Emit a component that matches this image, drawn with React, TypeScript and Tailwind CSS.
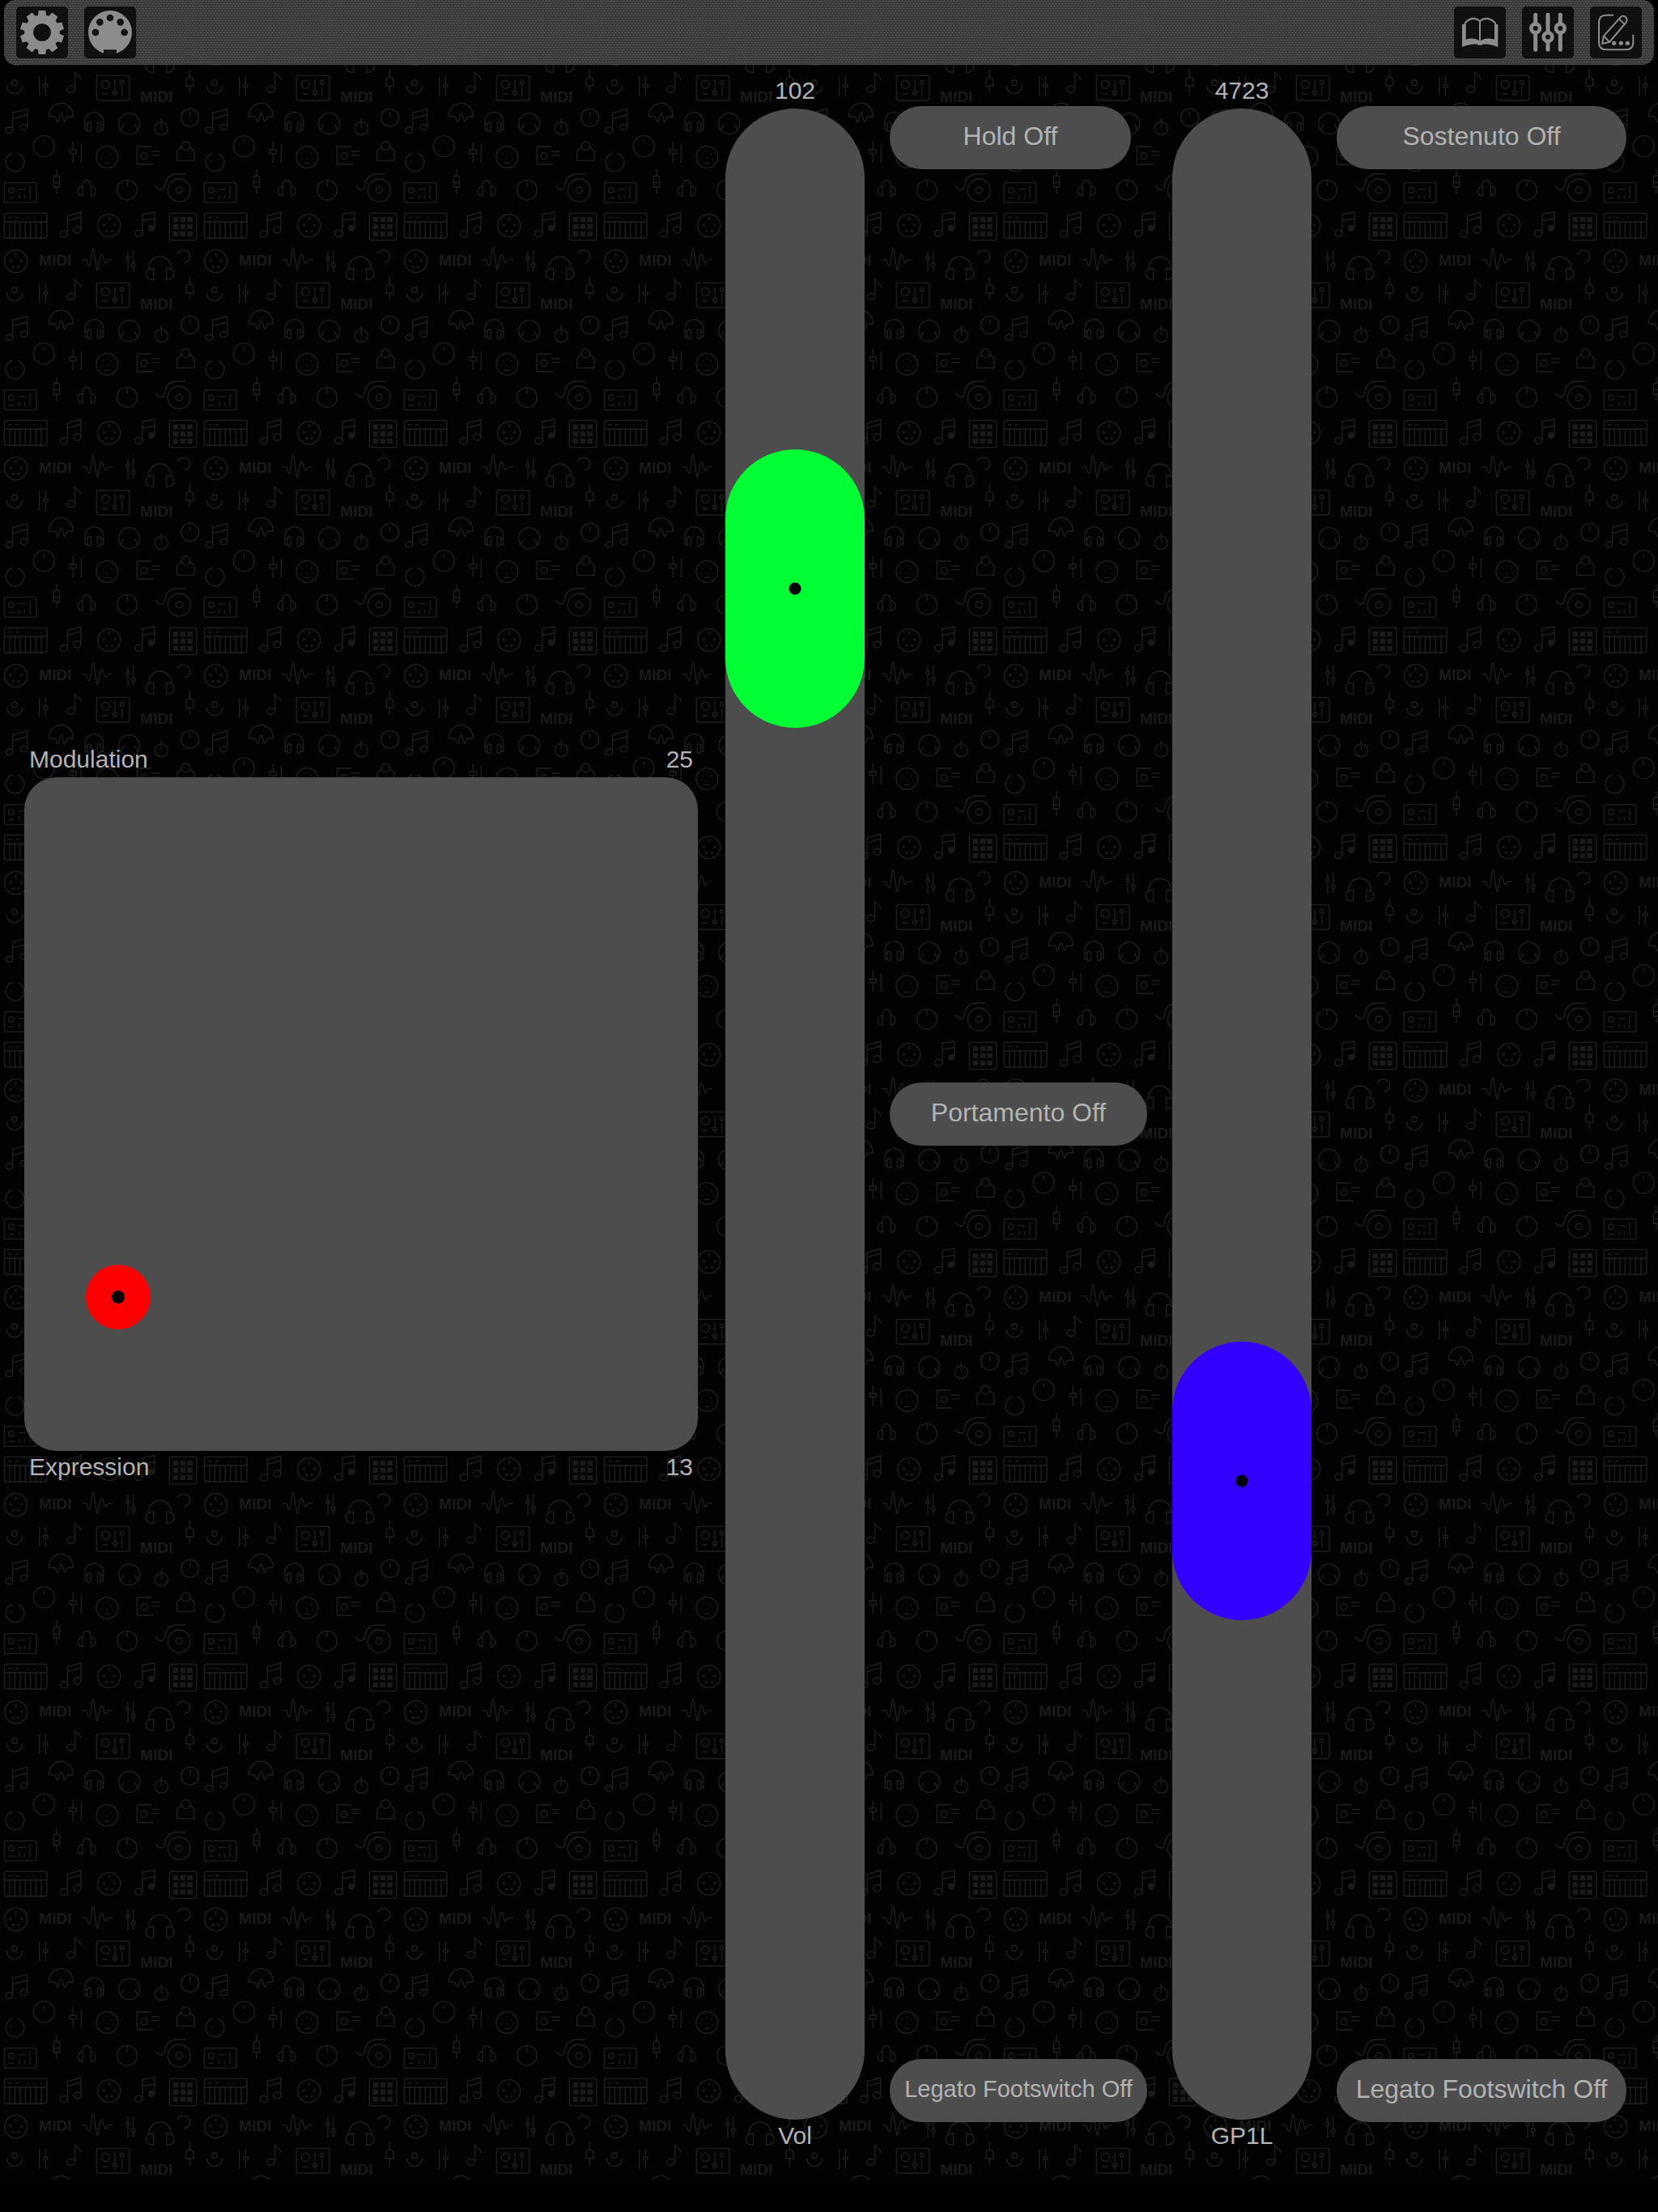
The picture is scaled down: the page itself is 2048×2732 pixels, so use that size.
import { useState } from "react";
import type { ReactNode } from "react";

function PatternIcons() {
  const keys = [36, 55, 75, 94, 113, 133, 153];
  const padX = [641, 668, 694];
  const padY = [594, 620, 647];
  return (
    <g id="midi-icons" fill="none" stroke="#1f1f1f" strokeWidth="4" strokeLinecap="round" strokeLinejoin="round">
      {/* knobs and faders */}
      <circle cx="54" cy="97" r="10" />
      <path d="M25 108A29 29 0 0 0 83 108" />
      <path d="M146 75V143M169 73V103M169 112V143M161 103h16v9h-16z" />
      <ellipse cx="263" cy="121" rx="15" ry="12" />
      <path d="M278 121V57C280 71 300 69 300 85" />
      <rect x="358" y="70" width="122" height="92" rx="8" />
      <circle cx="391" cy="103" r="15" />
      <path d="M381 138h17M426 87V128M419 128h14v10h-14zM426 138v8M452 111V147" />
      <circle cx="452" cy="95" r="7" />
      <path d="M703 48V75M690 108V84L697 76H709L717 84V108ZM703 108V132" />

      {/* notes, headphones */}
      <ellipse cx="34" cy="272" rx="13" ry="11" />
      <path d="M47 272V208L101 194V260M47 230L101 216" />
      <ellipse cx="88" cy="261" rx="13" ry="11" />
      <path d="M181 222A45 50 0 0 1 271 222H254Q248 222 245 232Q240 250 236 232L231 216Q226 202 222 218L218 234Q213 250 209 232Q206 220 199 222Z" />
      <path d="M315 250V240A34 34 0 0 1 383 240V250M324 251h-9v20h9M374 251h9v20h-9" />
      <rect x="324" y="243" width="13" height="34" rx="5" />
      <rect x="361" y="243" width="13" height="34" rx="5" />
      <circle cx="479" cy="248" r="39" />
      <path d="M458 252L447 273M500 252L511 273" />
      <circle cx="598" cy="266" r="24" />
      <path d="M598 230V262" />
      <circle cx="704" cy="226" r="33" />
      <path d="M704 206V222" />

      <circle cx="163" cy="332" r="39" />
      <path d="M163 309V319" />
      <path d="M44 359A34 34 0 1 0 67 359M42 387v2" />
      <path d="M271 316V345M259 345h24v14h-24zM271 359V391M301 327V391" />
      <circle cx="397" cy="372" r="40" />
      <path d="M397 351v1M381 360v1M412 360v1M376 378v1M397 376v1M418 378v1M388 394h18" />
      <path d="M560 333H508V399H565M563 351H591M563 365H591" />
      <circle cx="534" cy="368" r="12" />
      <path d="M673 334L656 350V385H720V350L703 334" />
      <circle cx="688" cy="331" r="16" />

      {/* decks and jacks */}
      <rect x="16" y="467" width="119" height="74" rx="6" />
      <circle cx="42" cy="495" r="10" />
      <path d="M34 523h17M69 491h26M72 513v12M91 513v12M111 481v44" />
      <path d="M210 419V441M199 483V452Q199 441 210 441Q221 441 221 452V483ZM199 467h22M210 483V506" />
      <path d="M306 516V482Q306 459 321 457Q337 459 337 482V516M306 479Q289 484 289 498Q289 514 306 516M337 479Q354 484 354 498Q354 514 337 516" />
      <circle cx="471" cy="494" r="37" />
      <path d="M471 460V478" />
      <circle cx="664" cy="495" r="42" />
      <circle cx="664" cy="495" r="12" />
      <path d="M577 478Q588 496 602 492Q610 488 612 470Q620 436 655 435H685" />

      {/* keyboard, pads */}
      <rect x="16" y="580" width="158" height="92" rx="8" />
      <path d="M16 612H174M31 596h11M58 596h11M106 597v1M129 597v1M152 597v1" />
      {keys.map((x) => (
        <path key={x} d={`M${x} 612V672`} />
      ))}
      <ellipse cx="237" cy="656" rx="14" ry="12" />
      <path d="M250 656V590L300 576V640M250 608L300 594" />
      <ellipse cx="286" cy="642" rx="14" ry="12" />
      <circle cx="404" cy="626" r="42" />
      <path d="M405 595V605" />
      <ellipse cx="514" cy="655" rx="14" ry="12" />
      <path d="M528 655V583L573 576V636M528 607L573 600" />
      <rect x="628" y="580" width="101" height="100" rx="8" />

      <circle cx="59" cy="758" r="42" />
      <path d="M59 727V738" />
      <path d="M305 752H320Q326 776 332 775Q336 774 340 730Q345 690 350 730L357 775Q362 808 367 765Q374 718 382 742Q390 775 395 760Q399 752 405 752H416" />
      <path d="M474 723V740M474 754V796M494 720V764M494 780V794" />
      <circle cx="474" cy="747" r="6" />
      <circle cx="494" cy="772" r="7" />
      <path d="M551 784A42 43 0 0 1 635 784M569 784V826Q541 826 541 804Q541 784 569 784ZM617 784V826Q645 826 645 804Q645 784 617 784Z" />
      <path d="M658 731A24 22 0 0 1 704 742Q704 758 685 763" />

      <g fill="#1a1a1a" stroke="none">
        {padX.map((x) => padY.map((y) => <rect key={`${x}-${y}`} x={x} y={y} width="20" height="19" />))}
        <circle cx="561" cy="635" r="12" />
        <circle cx="385" cy="624" r="5" />
        <circle cx="425" cy="624" r="5" />
        <circle cx="395" cy="646" r="5" />
        <circle cx="415" cy="646" r="5" />
        <circle cx="39" cy="756" r="5" />
        <circle cx="79" cy="756" r="5" />
        <circle cx="49" cy="778" r="5" />
        <circle cx="68" cy="778" r="5" />
        <g fontFamily="Liberation Sans, Arial, sans-serif" fontWeight="700" fontSize="57">
          <text x="520" y="167">MIDI</text>
          <text x="145" y="774">MIDI</text>
        </g>
      </g>
    </g>
  );
}

function Wallpaper() {
  return (
    <svg className="pointer-events-none absolute inset-0 h-full w-full" aria-hidden="true">
      <defs>
        <pattern id="wallpaper" width="741" height="768" patternUnits="userSpaceOnUse" patternTransform="scale(0.333333)">
          <g transform="translate(0 -30)">
            <PatternIcons />
            <use href="#midi-icons" y="-768" />
          </g>
        </pattern>
      </defs>
      <rect width="100%" height="100%" fill="url(#wallpaper)" />
    </svg>
  );
}

function Weave() {
  return (
    <svg className="pointer-events-none absolute inset-0 h-full w-full" aria-hidden="true">
      <defs>
        <pattern id="weave" width="4" height="6" patternUnits="userSpaceOnUse">
          <rect width="4" height="6" fill="#343434" />
          <path d="M0 1.5H3M2 4.5H4M0 4.5H1" stroke="#525252" strokeWidth="1.6" />
        </pattern>
      </defs>
      <rect width="100%" height="100%" fill="url(#weave)" />
    </svg>
  );
}

function ToolButton({ label, viewBox, children }: { label: string; viewBox: string; children: ReactNode }) {
  return (
    <button type="button" aria-label={label} className="relative size-16 rounded-[5px] bg-black/75 text-[#8c8c8c]">
      <svg viewBox={viewBox} className="size-full" fill="none" stroke="currentColor" aria-hidden="true">
        {children}
      </svg>
    </button>
  );
}

function Toolbar() {
  const teeth = [0, 36, 72, 108, 144, 180, 216, 252, 288, 324];
  return (
    <header className="relative mx-[5px] flex h-20 items-center justify-between overflow-hidden rounded-[14px] px-[15px]">
      <Weave />
      <div className="flex gap-5">
        <ToolButton label="Settings" viewBox="60 24 192 192">
          <circle cx="156" cy="120" r="49" strokeWidth="33" />
          {teeth.map((a) => (
            <path key={a} d="M143 39H169L172 62H140Z" fill="currentColor" stroke="none" transform={`rotate(${a} 156 120)`} />
          ))}
        </ToolButton>
        <ToolButton label="MIDI connections" viewBox="312 24 192 192">
          <circle cx="408" cy="120" r="81" fill="currentColor" stroke="none" />
          <g fill="#141414" stroke="none">
            <circle cx="354" cy="120" r="13" />
            <circle cx="370" cy="82" r="13" />
            <circle cx="408" cy="66" r="13" />
            <circle cx="446" cy="82" r="13" />
            <circle cx="461" cy="120" r="13" />
            <rect x="384" y="184" width="48" height="20" />
          </g>
        </ToolButton>
      </div>
      <div className="flex gap-5">
        <ToolButton label="Manual" viewBox="108 24 192 192">
          <path d="M149 148V85Q176 56 204 78Q232 56 261 85V148M204 76V158" strokeWidth="6" />
          <path
            d="M138 90H151V147Q182 136 204 153Q228 136 259 147V90H271V174Q238 161 213 164V167H196V164Q171 161 138 174Z"
            fill="currentColor"
            stroke="none"
          />
        </ToolButton>
        <ToolButton label="Controllers" viewBox="360 24 192 192">
          <path d="M410 55V184M456 55V184M502 55V184" strokeWidth="15" strokeLinecap="round" />
          <g fill="#141414" strokeWidth="14">
            <circle cx="410" cy="105" r="16" />
            <circle cx="456" cy="137" r="16" />
            <circle cx="502" cy="105" r="16" />
          </g>
        </ToolButton>
        <ToolButton label="Edit layout" viewBox="612 24 192 192">
          <path d="M699 56H672Q645 56 645 84V156Q645 184 672 184H745Q772 184 772 156V128" strokeWidth="6" />
          <path
            d="M657 162L663 133L725 64Q734 55 744 63Q753 72 745 84L684 156ZM663 133L684 156M720 70L741 91"
            strokeWidth="6"
            strokeLinejoin="round"
          />
          <g fill="currentColor" stroke="none">
            <circle cx="701" cy="160" r="8" />
            <circle cx="727" cy="160" r="8" />
            <circle cx="751" cy="160" r="8" />
          </g>
        </ToolButton>
      </div>
    </header>
  );
}

const THUMB_GREEN =
  "[&::-webkit-slider-thumb]:bg-[radial-gradient(circle,#000_7px,#00ff33_8px)]";
const THUMB_BLUE =
  "[&::-webkit-slider-thumb]:bg-[radial-gradient(circle,#000_7px,#3300ff_8px)]";

function Fader({ name, value, max, thumb }: { name: string; value: number; max: number; thumb: string }) {
  const [reading, setReading] = useState(value);
  const id = `fader-${name}`;
  return (
    <div className="flex flex-col items-center">
      <output htmlFor={id} className="mb-1">
        {reading}
      </output>
      <input
        id={id}
        type="range"
        min={0}
        max={max}
        value={reading}
        onChange={(e) => setReading(Number(e.target.value))}
        className={`m-0 min-h-0 w-full flex-1 appearance-none rounded-full bg-[#4d4d4d] [direction:rtl] [writing-mode:vertical-lr] [&::-webkit-slider-thumb]:h-[344px] [&::-webkit-slider-thumb]:w-[172px] [&::-webkit-slider-thumb]:appearance-none [&::-webkit-slider-thumb]:rounded-full ${thumb}`}
      />
      <label htmlFor={id} className="mt-0.5">
        {name}
      </label>
    </div>
  );
}

function XYPad({ x, y }: { x: number; y: number }) {
  return (
    <section aria-label="Modulation and Expression" className="flex flex-col justify-center pr-[3px]">
      <div className="mb-1 flex justify-between px-1.5">
        <span>Modulation</span>
        <output>25</output>
      </div>
      <div className="relative aspect-square w-full rounded-[40px] bg-[#4d4d4d]">
        <button
          type="button"
          aria-label="Modulation and Expression handle"
          className="absolute flex size-20 items-center justify-center rounded-full bg-[#ff0000]"
          style={{ left: `calc((100% - 80px) * ${x})`, bottom: `calc((100% - 80px) * ${y})` }}
        >
          <span className="size-4 rounded-full bg-black" />
        </button>
      </div>
      <div className="mt-0.5 flex justify-between px-1.5">
        <span>Expression</span>
        <output>13</output>
      </div>
    </section>
  );
}

function Toggle({ name, className = "" }: { name: string; className?: string }) {
  const [on, setOn] = useState(false);
  return (
    <button
      type="button"
      aria-pressed={on}
      onClick={() => setOn(!on)}
      className={`h-[78px] rounded-full bg-[#4d4d4d] pb-1 whitespace-nowrap ${className}`}
    >
      {name} {on ? "On" : "Off"}
    </button>
  );
}

export default function App() {
  return (
    <div className="flex min-h-screen flex-col bg-black pb-10 font-['Liberation_Sans',Arial,sans-serif] text-[#b3b3b3]">
      <Toolbar />
      <div className="relative flex flex-1 flex-col bg-[#020203]">
        <Wallpaper />
        <main className="relative grid flex-1 grid-cols-[minmax(0,835fr)_172px_minmax(0,318fr)_172px_minmax(0,358fr)] gap-x-[31px] pt-[14px] pr-[39px] pb-9 pl-[30px] text-[30px] leading-9">
          <XYPad x={0.101} y={0.1995} />
          <Fader name="Vol" value={102} max={127} thumb={THUMB_GREEN} />
          <div className="mt-[37px] mb-[35px] flex flex-col justify-between">
            <Toggle name="Hold" className="mr-5 text-[32px]" />
            <Toggle name="Portamento" className="text-[32px]" />
            <Toggle name="Legato Footswitch" className="text-[29px]" />
          </div>
          <Fader name="GP1L" value={4723} max={16383} thumb={THUMB_BLUE} />
          <div className="mt-[37px] mb-[35px] flex flex-col justify-between text-[32px]">
            <Toggle name="Sostenuto" />
            <Toggle name="Legato Footswitch" />
          </div>
        </main>
      </div>
    </div>
  );
}
